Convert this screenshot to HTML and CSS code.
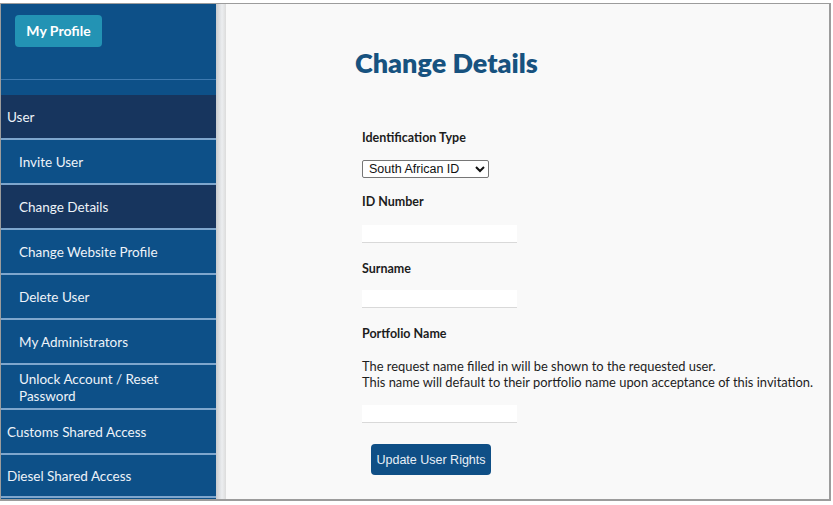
FILE: index.html
```html
<!DOCTYPE html>
<html lang="en">
<head>
  <meta charset="UTF-8" />
  <meta name="viewport" content="width=device-width, initial-scale=1.0"/>
  <title>Change Details</title>
  <link rel="stylesheet" href="styles.css">
</head>
<body>
  <div class="frame">
    <nav class="sidebar">
      <div class="sidebar-top">
        <a href="#" class="profile-btn">My Profile</a>
      </div>
      <ul class="menu">
        <li class="menu-item active">User</li>
        <li class="menu-item sub">Invite User</li>
        <li class="menu-item sub active">Change Details</li>
        <li class="menu-item sub">Change Website Profile</li>
        <li class="menu-item sub">Delete User</li>
        <li class="menu-item sub">My Administrators</li>
        <li class="menu-item sub">Unlock Account / Reset<br>Password</li>
        <li class="menu-item">Customs Shared Access</li>
        <li class="menu-item">Diesel Shared Access</li>
      </ul>
    </nav>

    <div class="gutter"></div>

    <main class="content">
      <h1>Change Details</h1>

      <div class="form">
        <label class="field-label first" for="idType">Identification Type</label>
        <select id="idType" class="select">
          <option>South African ID</option>
          <option>Passport</option>
        </select>

        <label class="field-label" for="idNumber">ID Number</label>
        <input type="text" id="idNumber" class="text-input" />

        <label class="field-label wide" for="surname">Surname</label>
        <input type="text" id="surname" class="text-input tight" />

        <label class="field-label wide" for="portfolio">Portfolio Name</label>
        <p class="note">The request name filled in will be shown to the requested user.<br>This name will default to their portfolio name upon acceptance of this invitation.</p>
        <input type="text" id="portfolio" class="text-input" />

        <button class="btn">Update User Rights</button>
      </div>
    </main>
  </div>
</body>
</html>
```

FILE: styles.css
```css
body {
  margin: 0;
  padding: 0;
  background-color: #ffffff;
  font-family: Lato, "Open Sans", sans-serif;
}

.frame {
  display: flex;
  height: 495px;
  margin: 3px 2px 0 0;
  border: 1px solid #9c9c9c;
  border-right-width: 2px;
  border-bottom-width: 2px;
}

.sidebar {
  width: 215px;
  background-color: #0d5088;
  flex-shrink: 0;
  overflow: hidden;
}

.sidebar-top {
  height: 76px;
  padding-top: 11px;
  padding-left: 14px;
  box-sizing: border-box;
  border-bottom: 1px solid #3d79b0;
}

.profile-btn {
  display: inline-block;
  width: 87px;
  height: 32px;
  line-height: 32px;
  text-align: center;
  background-color: #2393b4;
  color: #ffffff;
  font-weight: bold;
  font-size: 14px;
  border-radius: 4px;
  text-decoration: none;
}

.menu {
  list-style: none;
  margin: 15px 0 0;
  padding: 0;
  border-bottom: 2px solid #7ea6cd;
}

.menu-item {
  min-height: 45px;
  box-sizing: border-box;
  display: flex;
  align-items: center;
  padding: 2px 0 0 6px;
  color: #eef3f9;
  font-size: 13.5px;
  line-height: 17px;
  border-bottom: 2px solid #7ea6cd;
}

.menu-item:last-child {
  min-height: 41px;
  border-bottom: none;
}

.menu-item.sub {
  padding-left: 18px;
}

.menu-item.active {
  background-color: #17355e;
}

.gutter {
  width: 10px;
  background: linear-gradient(to right, #c9cbce, #eceef0 60%, #dcdcdc);
  flex-shrink: 0;
}

.content {
  flex: 1;
  background-color: #f9f9f9;
  padding-left: 129px;
}

h1 {
  margin: 43px 0 0;
  font-size: 27px;
  line-height: 32px;
  color: #17527f;
  font-weight: 800;
}

.form {
  padding-left: 7px;
}

.field-label {
  display: block;
  margin-top: 16px;
  font-size: 12.5px;
  line-height: 16px;
  font-weight: bold;
  color: #1d1d1d;
}

.field-label.first {
  margin-top: 51px;
}

.field-label.wide {
  margin-top: 18px;
}

.select {
  display: block;
  margin-top: 14px;
  width: 127px;
  height: 18px;
  padding: 0 2px;
  font-family: "Liberation Sans", Arial, sans-serif;
  font-size: 12.5px;
  color: #111;
  background-color: #ffffff;
  border: 1px solid #767676;
  border-radius: 2px;
}

.text-input {
  display: block;
  margin-top: 15px;
  width: 155px;
  height: 18px;
  box-sizing: border-box;
  border: none;
  border-bottom: 1px solid #d9d9d9;
  background-color: #ffffff;
}

.text-input.tight {
  margin-top: 13px;
}

.note {
  margin: 16px 0 15px;
  font-size: 12.9px;
  line-height: 16px;
  color: #1d1d1d;
}

.note + .text-input {
  margin-top: 0;
}

.btn {
  display: block;
  margin: 21px 0 0 9px;
  width: 120px;
  height: 31px;
  padding: 0;
  white-space: nowrap;
  background-color: #0f4f86;
  color: #e9f0f7;
  border: none;
  border-radius: 4px;
  font-family: "Liberation Sans", Arial, sans-serif;
  font-size: 12.5px;
  cursor: pointer;
}
```
